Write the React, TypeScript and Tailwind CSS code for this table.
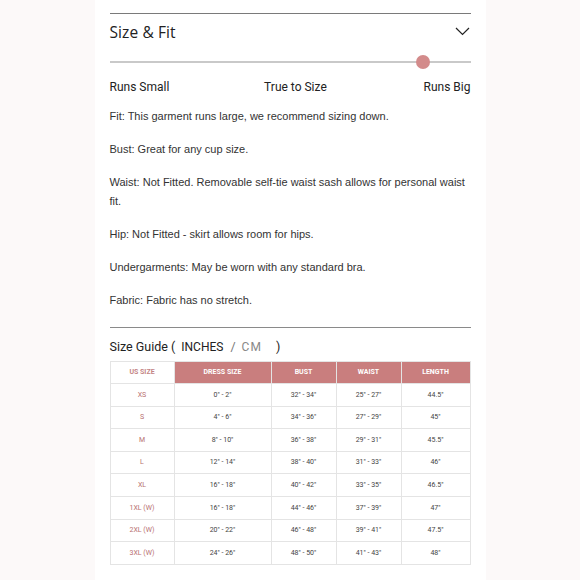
import React from 'react';

const rows = [
    ['XS', '0" - 2"', '32" - 34"', '25" - 27"', '44.5"'],
    ['S', '4" - 6"', '34" - 36"', '27" - 29"', '45"'],
    ['M', '8" - 10"', '36" - 38"', '29" - 31"', '45.5"'],
    ['L', '12" - 14"', '38" - 40"', '31" - 33"', '46"'],
    ['XL', '16" - 18"', '40" - 42"', '33" - 35"', '46.5"'],
    ['1XL (W)', '16" - 18"', '44" - 46"', '37" - 39"', '47"'],
    ['2XL (W)', '20" - 22"', '46" - 48"', '39" - 41"', '47.5"'],
    ['3XL (W)', '24" - 26"', '48" - 50"', '41" - 43"', '48"'],
];

const notes = [
    'Fit: This garment runs large, we recommend sizing down.',
    'Bust: Great for any cup size.',
    'Waist: Not Fitted. Removable self-tie waist sash allows for personal waist fit.',
    'Hip: Not Fitted - skirt allows room for hips.',
    'Undergarments: May be worn with any standard bra.',
    'Fabric: Fabric has no stretch.',
];

const colWidths = ['w-[64px]', 'w-[97px]', 'w-[65px]', 'w-[65px]', 'w-[69px]'];

export default function App() {
    return (
        <div className="min-h-[580px] bg-[#fcf9f9] flex justify-center">
            <div className="w-[391px] bg-white px-[15px] pt-[13px] pb-[16px]">
                <div className="border-t border-[#7a7a7a]" />

                <div className="mt-[8px] flex items-center justify-between">
                    <h2 className="text-[15.5px] leading-[20px] text-[#222] font-['Open_Sans',sans-serif] tracking-[0.1px]">Size &amp; Fit</h2>
                    <svg width="15" height="9" viewBox="0 0 15 9" className="mr-[1px] -mt-[2px]">
                        <polyline points="1,1 7.5,7.5 14,1" fill="none" stroke="#222" strokeWidth="1.2" />
                    </svg>
                </div>

                <div className="mt-[13px] relative h-[14px] flex items-center">
                    <div className="w-full h-[1.5px] bg-[#c9c9c9]" />
                    <div className="absolute left-[306px] top-0 w-[14px] h-[14px] rounded-full bg-[#d38b8b]" />
                </div>

                <div className="mt-[10px] flex justify-between text-[12px] leading-[16px] text-[#222] font-['Roboto',sans-serif]">
                    <span>Runs Small</span>
                    <span className="mr-[2px]">True to Size</span>
                    <span>Runs Big</span>
                </div>

                <div className="mt-[12px] flex flex-col gap-[14px] text-[11px] leading-[19px] text-[#333] font-['Liberation_Sans',Arial,sans-serif]">
                    {notes.map((n, i) => (
                        <p key={i}>{n}</p>
                    ))}
                </div>

                <div className="mt-[17px] border-t border-[#8a8a8a]" />

                <div className="mt-[10px] flex items-center text-[12.5px] leading-[18px] text-[#222] font-['Roboto',sans-serif]">
                    <span>Size Guide (</span>
                    <span className="ml-[6px] text-[12px]">INCHES</span>
                    <span className="ml-[7px] text-[#777]">/</span>
                    <span className="ml-[6px] text-[12px] text-[#888] tracking-[1px]">CM</span>
                    <span className="ml-[14px]">)</span>
                </div>

                <table className="mt-[5px] w-full border-collapse table-fixed font-['Roboto',sans-serif] text-[7px]">
                    <thead>
                        <tr className="h-[22px]">
                            <th className={`${colWidths[0]} border border-[#e4e4e4] bg-white text-[#c48585] font-bold`}>US SIZE</th>
                            {['DRESS SIZE', 'BUST', 'WAIST', 'LENGTH'].map((h, i) => (
                                <th key={h} className={`${colWidths[i + 1]} border border-[#e4e4e4] bg-[#c97e7e] text-white font-bold`}>
                                    {h}
                                </th>
                            ))}
                        </tr>
                    </thead>
                    <tbody>
                        {rows.map(r => (
                            <tr key={r[0]} className="h-[22.6px]">
                                {r.map((c, i) => (
                                    <td
                                        key={i}
                                        className={`border border-[#e4e4e4] text-center ${i === 0 ? 'text-[#b76f6f]' : 'text-[#444]'}`}
                                    >
                                        {c}
                                    </td>
                                ))}
                            </tr>
                        ))}
                    </tbody>
                </table>
            </div>
        </div>
    );
}
